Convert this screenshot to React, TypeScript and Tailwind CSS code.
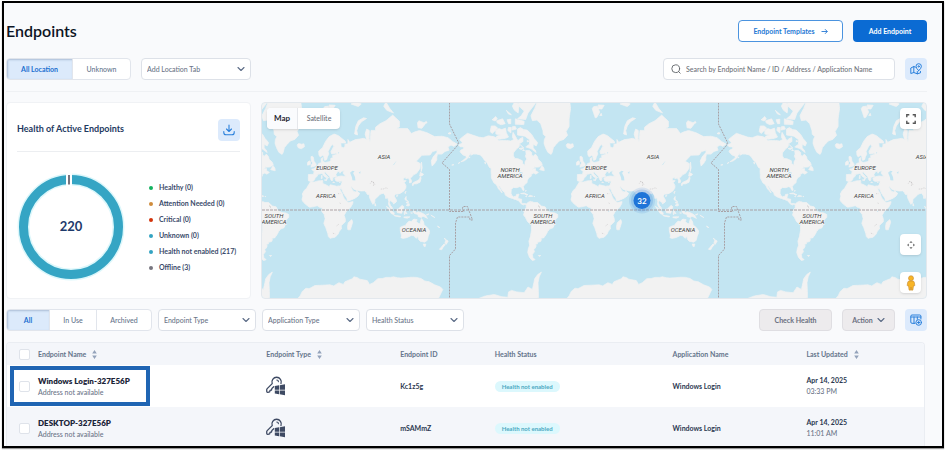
import { useState, type ReactNode } from "react";
import { clsx } from "clsx";

/* ---------- World map data (lon,lat pairs) ---------- */

const LAND = [
  // North America
  "-168,65.6 -166,64.6 -161,64.5 -161,63.5 -165,62.5 -166,61.5 -162,59.5 -158,58.8 -157.5,57.5 -162,55.5 -165,54.4 -160,55.2 -156,57 -153.5,59.3 -151.5,60.8 -151.5,59.2 -148,60 -144,60 -139,59.5 -136,58 -133,55.5 -130,54 -127.5,51 -124,49 -124.5,47 -124,43 -124,40 -122,37 -120.5,34.5 -117.5,33 -116,30.5 -114.5,28 -112,25.5 -110,23 -109.5,23.5 -111.5,26.5 -113,29 -114.7,31.5 -113,31 -109.5,26 -106,23 -105.5,20.3 -102,18 -96,15.8 -92,14.5 -87.5,13 -85.7,10.5 -83,8.2 -80.5,7.4 -79,8.8 -77.5,7.5 -77,8.5 -79.5,9.4 -82,9 -83.6,11 -83.4,15 -88.5,15.8 -88,18 -87,21.3 -90.3,21 -91,18.7 -94.5,18.2 -96.5,19.5 -97.7,22.5 -97.3,27 -94.5,29.5 -90,29.2 -86,30.3 -83.5,29.5 -82.5,27 -81,25.2 -80.2,27 -81.3,30.5 -79,33.2 -76,35 -76,37 -74,40 -70.5,41.7 -70.5,43.3 -67,44.8 -64.5,43.6 -61,45.3 -64.8,47 -65,49 -69,48.2 -66,50 -60,50.2 -56,52 -57,54 -61.5,56.5 -62,58 -65,60 -68,58.5 -70,59.5 -70,61 -73,62.3 -78,62.3 -77.5,60 -78.5,58.5 -76.5,56.5 -79,54.5 -79,51.7 -82.2,53 -82.5,55.2 -88,56.7 -92.5,57 -94.5,58.8 -94.5,60.8 -90.5,63.2 -87,64.5 -86,66.3 -81.5,67.5 -82,69.5 -87,68.5 -88,67.7 -90,68.8 -91.5,69.8 -95,71.7 -96,69.5 -94,68.5 -98,67.7 -104,68 -108,68 -114,67.8 -116,69 -121,69.8 -128,70.2 -135,69.3 -141,69.6 -149,70.5 -156,71.3 -163,69.5 -166.5,68.4 -163,67 -164,66.4",
  // Arctic islands
  "-64,61 -71,63.5 -78,64.5 -73,66 -73,68.3 -79,70 -89,70.5 -89,73 -85,73.6 -81,72.8 -76,72.6 -70,70.8 -67,69 -62,66.8 -64,65 -68,66 -68,63.8 -65.5,62.8",
  "-117,69 -113,68.6 -105,69 -101,69.6 -104,71.5 -105,73.4 -110,72.8 -114,73.2 -118,72.5 -118,71 -112,70.5 -117,70",
  "-125.5,72 -123,71.2 -120,72 -115.5,73.4 -119,74.2 -124,74.2",
  "-98,71.4 -97,73.6 -101,73.7 -102,72.5",
  "-96,72.6 -90.5,73 -92,74 -95.5,74",
  "-80.5,74.7 -80,75.8 -89,76.4 -92,76.6 -92,74.8",
  "-105.5,75 -109,76.6 -117,76 -116,75.2 -111,74.6",
  "-116,76.5 -118,77.3 -123,76.3 -119,75.9",
  "-98,75 -98,76.5 -103,76.3 -101,75",
  "-78,76.4 -75,78.3 -66,80.4 -60,82 -90,82 -87,80 -80,78.8 -84,77.5 -89,76.6",
  "-88,78.3 -87,80.2 -92,81.2 -96,80 -93,79",
  "-97,77.8 -104,79 -101,78",
  "-85.5,65.8 -81,64 -87,63.6 -84,62.9 -80.5,63.8",
  "-79.5,62.4 -82,62.2 -81,63",
  "-76,68 -73.5,67.6 -76,67.2",
  // Greenland
  "-44,59.8 -48.5,61.2 -51.5,64 -53.5,66.5 -53,68.5 -51,69.8 -54.5,70.8 -55,72.5 -58,75 -63,76.2 -69,76 -71,77.5 -66,79.5 -60,82 -20,82 -18,79.5 -20,76.5 -20,74 -24,72 -22,70.4 -27,68.5 -33,67.7 -38,65.6 -41,64 -42.5,61",
  // Iceland, Svalbard, Jan Mayen
  "-22.5,64 -18.5,63.4 -14,64.6 -14.8,66.2 -18,66 -22,66.4 -24,65.5",
  "11,79.4 15,76.9 17,77 21,78.5 18,80 13,79.9",
  "19,80.3 27,80.2 24,79.3 19,79.4",
  "21,77.6 24,77.6 23,78.2",
  // Novaya Zemlya, Franz Josef, Severnaya Zemlya, New Siberian Islands
  "53,71 57,70.6 56,72.5 58,74.2 62,75.6 69,76.7 65,76.9 58,76 54.5,74",
  "48,80.5 58,79.9 62,80.5 55,81",
  "96,79 105,78.3 100,79.5 95,80.9 92,80",
  "138,73.5 143,73.3 148,75.1 139,76 137,75.3",
  "146,75.2 150,75.2 149,75.8",
  "178,71.2 181,70.9 182,71.4 180,71.6",
  // Newfoundland, Vancouver, Haida Gwaii, Aleutians
  "-59.3,47.8 -53.2,46.8 -53.5,49 -56,51.4 -58,49.5",
  "-125,50 -123.5,48.5 -127.5,50.5",
  "-132,52.6 -131.5,54 -133,54",
  "-154.5,57.4 -152.5,57.6 -153,58.2",
  "-168.5,53.2 -166,54 -167.5,53.3",
  "-177,51.8 -174,52.2 -175,51.9",
  // Caribbean
  "-84.8,22 -80,22.9 -75,20.6 -77.5,20 -79,21.6",
  "-74.3,18.4 -70,18.3 -68.5,18.8 -70.5,19.8 -73,19.8",
  "-78.3,18.3 -76.3,18 -77,18.5",
  "-67,18 -65.8,18.4 -67,18.5",
  "-78,24.5 -77.5,26.5 -78.3,25",
  // South America
  "-77.3,8.5 -75,10.8 -71.5,12.3 -71.7,10.8 -70,12 -67,10.6 -62,10.7 -60,8.5 -57,6 -52,5 -50,1 -48,-1 -44,-2.7 -39,-3.2 -35,-5.5 -35,-9 -38.8,-13 -39.5,-18 -41.5,-22.5 -46,-24 -48.6,-27 -51,-31 -54,-34.5 -57.5,-34.6 -57,-36.5 -58,-38.3 -62,-39 -62.5,-41 -65,-41 -64,-42.8 -65.5,-45 -67.5,-46.5 -66,-48 -69,-50.5 -68.5,-53 -65.5,-54.8 -69,-55.5 -73,-53 -75.3,-49 -74.5,-45.5 -72.8,-42 -73.7,-38 -71.7,-33 -70.3,-26 -70.3,-18.5 -75.5,-15 -78.5,-9 -81,-6 -80,-3 -80.8,-1 -79,1.5 -77.3,4 -77.5,7",
  "-61,-51.5 -58,-51.5 -60,-52.2",
  // Eurasia
  "-9,38.7 -8.8,43.3 -2,43.5 -1.2,46 -4.5,48.3 -1.5,48.7 1.5,50.2 4,51.8 5,53.2 8.5,53.8 8.2,56.8 10.5,57.6 10.5,55 12,54.2 14.5,54 19,54.5 21,55.3 21.3,57.2 24,57.2 23.5,59.1 29.5,59.9 28,60.6 22.5,60 21.3,61.5 25,64.8 24,65.8 21.5,65.2 17.5,61.8 18.5,60 16.5,58 15.8,56.2 13,55.5 11.5,58.5 10.3,59.3 7,58 5.2,59.5 5,62 10,64 14,67.5 19,69.8 25.5,71 31,70.3 40.5,67.6 41,66.6 34.5,66.7 35,64.5 38,64 40,64.7 40,66 44,66.2 44,68.5 46.5,67 54,68.4 60,68.7 65,69 69,68.5 67,71 69,73 72.7,72.5 72.5,69 73.6,67 74,68.5 74.5,71 75,72.5 81,72.5 81,73.7 87,75 95,76 104,77.7 113,75.8 113,73.8 108,73.2 124,73.2 129,71.2 133,71.8 140,72.5 150,71.5 160,69.8 170,70 178,69.3 184,67.5 190,66.1 186,64.8 182,65.5 178,64.5 179.5,62.5 174,61.8 170,60 164,60 163,58 163,56 160,53 156.7,51 155.5,55 158,58 163,61 163.5,62.5 157,61.6 154,59.4 143,59.2 135.5,54.8 141,53 140.5,49 136,44.5 132,43 129.5,41 127.5,39.5 129.3,37 129,35.2 126.5,34.5 126.5,37.5 124.8,39.7 121.5,39 121.5,40.8 117.8,39 119,37.3 122,37 119.5,35 121.8,31.5 121.5,28.5 119,25.3 114,22.3 110,21.3 108,21.5 105.8,19 109,14 109,11.5 105,8.7 104.8,10.3 100.8,13.3 99.5,10.5 101,6.8 103.4,3.8 103.5,1.4 101,3 98.3,8 98.6,12 97.5,16.5 94.5,16 94.3,19 91.8,22.5 88.5,21.7 86.8,20.8 82.3,16.6 80.2,15 80,11 77.5,8.2 76,10.5 73,17 72.6,21 70,21 68.5,23.6 66.5,25.3 61,25.2 57,26 54,26.6 51,28 49,30.2 48,30 50,26.8 51.5,25 54,24.1 56.3,26 57,24 59.8,22.5 57.8,19 55,17 52,15.5 45,12.8 43.2,13 42.5,16.5 39,21 35.5,27.5 34.9,29.5 34,27.8 32.5,29.9 32.5,31.2 34.5,31.6 36,35 36,36.8 32,36.1 28,36.7 26.5,39.5 29,41 35,42 41.3,41.3 37.5,44.7 39,47 35,46.2 33.5,44.5 32.5,46.2 30.5,46.2 28,43.5 28.8,41.2 26,40.8 23.8,40.3 24,38 22.8,36.6 21.2,38 19.4,41.5 15,44.8 13.7,45.6 12.3,45 13.6,43.5 16,41.8 18.4,40 16.8,40.5 16.5,38.8 15.7,38 15.5,40 12.5,41.5 10.3,43.8 8.5,44.3 4.5,43.5 3,43 3.2,41.8 0,39.7 -0.5,38 -2.2,36.7 -5.6,36.1 -9,37",
  // British Isles, Mediterranean islands
  "-5.5,50 1.3,51.2 1.5,52.8 -1.5,55 -2,57.6 -3.5,58.6 -5.5,58.2 -5,55 -3,53.5 -5,52",
  "-10,51.7 -6.3,52.2 -6,54.5 -8,55.2 -10,54",
  "8.3,39 9.7,39.5 9.4,42.8 8.5,41.5",
  "12.5,37.8 15.4,37 15.5,38.2",
  "23.6,35.3 26.2,35.1 24,35.6",
  "32.4,34.9 34,35.2 33,35.3",
  // Africa, Madagascar
  "-6,35.8 -1,35.6 4,36.8 10.5,37.2 10.5,34 15,32.4 19,30.3 20.5,32.6 25,31.6 29,30.9 32.3,31.2 32.5,29.9 34,26 36.5,22 37.3,19 39.5,15.3 43.2,11.6 44.5,10.5 51,11.8 50.5,9 47.5,4.2 42,-1 39,-6.5 40.6,-11 40.5,-15 35,-20 35.5,-24 32.6,-26.5 31,-30 27,-33.6 20,-34.8 18,-33 17,-29 14.5,-22.5 11.8,-17 13.7,-11 12,-5 9,-1 9.7,3.8 6,4.3 3,6.4 -3,5 -7.5,4.4 -13,8.5 -16.7,12.5 -17.4,14.7 -16.2,19 -17,21.5 -14.5,26 -11,28.7 -9.7,31",
  "49.3,-12 50.4,-15.5 47.2,-25 44,-25 43.5,-21.5 44.4,-16.3",
  "80,9.7 81.8,7 80.3,6",
  // East Asia
  "130,33.5 131,31.2 132,33.5 136,33.6 140.5,35.3 142,39.5 141,41.4 139.7,38.5 136.8,37 132.5,35.4",
  "140,42 141,45.4 145.3,43.5 143,42",
  "142,46 143.5,49.5 142.5,54.2 142,50",
  "120.2,23 121.8,25.1 120.8,22",
  "108.7,19 110.9,20 110,18.3",
  "120.3,16 122,18.5 122,15 124,13 120.7,14",
  "122,7 126,9.5 126.3,6.5 124.5,6",
  "122,11 125,12.3 125,10.3 123,9.4",
  // Indonesia, New Guinea
  "95.5,5.5 98,4.2 103.5,-1 106,-3 105.8,-5.8 102,-4 98.7,1",
  "105.3,-6.6 108.5,-6.7 114.5,-7.8 114.3,-8.6 108,-7.7",
  "109,1.5 111.5,2 116.7,6.9 119,5 117.5,1 116,-3.8 110.3,-2.9",
  "119.5,-5.4 119.3,-2.5 120.5,1 125,1.6 121,-.7 123,-4.5 121.2,-2.4 120.4,-5.4",
  "119,-8.5 125,-8.3 127,-8.5 123.5,-10.3 119,-9.4",
  "127.5,1.8 128.6,.5 128,-.8",
  "128,-3.2 130.6,-3.3 128.5,-3.5",
  "131,-.8 134.2,-1 135.2,-3.3 138,-1.6 144,-3.8 147.8,-6.2 150.5,-10.5 144.5,-7.7 142.5,-9.2 138.2,-8.3 137.8,-5.5 133,-4",
  "149,-5.9 152.3,-4.3 151,-6",
  "155,-6 160.5,-9.4 156,-7",
  "164,-20.3 167,-22.3 165,-21.8",
  // Australia, New Zealand
  "114,-22 114.2,-26 115.7,-32 115,-34.2 118,-35 123.5,-33.9 129,-31.6 132,-32 135.5,-34.8 137.8,-32.8 138.2,-35.5 140.5,-38 144,-38.5 146.5,-39 150,-37.3 151.5,-33 153.5,-28 152.8,-25.2 149,-21 146,-19 145.3,-15 142.5,-10.8 141.5,-13.5 140.8,-17.5 139,-17.3 135.6,-15 136.8,-12.2 132.5,-11.4 130,-13.3 129,-15 126,-14 122.3,-17.5 121,-19.6 117,-20.7",
  "144.8,-41 148.3,-41 147.5,-43.4 146,-43.4",
  "173,-34.5 175.8,-36.8 178.3,-37.8 177,-39.5 175.3,-41.5 173.8,-39.3 175,-37.5",
  "172.8,-40.6 174.2,-41.7 171,-44.5 169.5,-46.5 166.5,-46 170,-43",
  // Antarctica
  "-180,-84 -180,-78 -150,-77 -140,-75.3 -132,-74.5 -120,-74 -110,-74.8 -102,-75 -101,-73 -97,-72.4 -90,-73 -80,-73.3 -75,-71 -69,-72 -67,-69 -66,-67 -62,-64.8 -57,-63.3 -60,-66 -61.5,-69 -61,-73 -61,-75 -60,-77 -30,-78 -27,-76.5 -20,-74.5 -17,-72.8 -12,-71.5 -8,-71.7 0,-70.3 10,-70.2 20,-70 25,-70.5 32,-69 38,-69.8 40,-68.6 45,-67.8 50,-67 52,-66 57,-66.5 60,-67.3 70,-68 73,-69.8 78,-69 84,-67 90,-66.9 95,-66.3 101,-66.3 105,-66 110,-66.5 115,-66.7 122,-66.5 130,-66.2 136,-66.3 142,-66.9 147,-68.2 153,-68.6 160,-70 168,-71 171,-72 166,-75 163,-78 180,-78 180,-84",
];

const LAKES = [
  "47,45 50,46.8 53,46.5 51,44.8 53.5,41 54,37.2 50,37.4 49.5,40.2",
  "58.5,45 61,46.5 60.5,44",
  "104,51.6 109.5,55.5 106,52.3",
  "-92,46.8 -88,48.6 -84.5,46.7 -88,46.8",
  "-87.5,42 -86,45.8 -82.5,45.5 -82,43.5 -84,45 -86.3,43.5",
  "-83,41.8 -79,42.8 -80,42.3",
  "30.5,60 32.5,61 31.5,61.4",
  "32,-1 33.8,0 33.5,-2",
];

const BORDERS = [
  "74,34 76,36 78,35.5 80,33 78,31.5 79,35 75,36.5",
  "88,27.5 92,27.8 95,29 97,28.3",
  "31,22 34,22",
  "33,10 35,9",
  "-60,5 -61,7 -59,3",
  "29,-20 32,-18",
  "24,-29 27,-30",
];

const CONTINENTS = [
  { lines: ["NORTH", "AMERICA"], x: 248, y: 69 },
  { lines: ["SOUTH", "AMERICA"], x: 281, y: 115 },
  { lines: ["EUROPE"], x: 334, y: 67 },
  { lines: ["AFRICA"], x: 333, y: 95 },
  { lines: ["ASIA"], x: 391, y: 56 },
  { lines: ["OCEANIA"], x: 421, y: 129 },
];

const MAP_WIDTH = 664;
const WORLD_WIDTH = 269;
const WORLD_OFFSETS = [-WORLD_WIDTH, 0, WORLD_WIDTH];
const RADIUS = WORLD_WIDTH / (2 * Math.PI);

const project = (pair: string) => {
  const [lon, lat] = pair.split(",").map(Number);
  const x = 322 + (lon * WORLD_WIDTH) / 360;
  const y = 108 - RADIUS * Math.log(Math.tan(Math.PI / 4 + (lat * Math.PI) / 360));
  return `${x.toFixed(1)} ${y.toFixed(1)}`;
};

const toPath = (shapes: string[], close: string) =>
  shapes.map((s) => "M" + s.split(" ").map(project).join("L") + close).join("");

const landPath = toPath(LAND, "Z");
const lakePath = toPath(LAKES, "Z");
const borderPath = toPath(BORDERS, "");

const World = ({ offset }: { offset: number }) => (
  <g transform={`translate(${offset} 0)`}>
    <path d={landPath} fill="#f2f2f2" stroke="#f2f2f2" strokeWidth=".7" strokeLinejoin="round" />
    <path d={lakePath} fill="#c3e5f2" />
    <path d={borderPath} fill="none" stroke="#b5b0b2" strokeWidth=".5" strokeDasharray="1 1" />
    <path
      d="M187.5 0V21.5L196.5 40L195.5 43L180 60.500L187.500 67V109H202L200.500 106L201 104H205.500L210.500 117.500H208L207.500 114.500H195.500L193.500 120.500V146.500L187.500 153V196"
      fill="none"
      stroke="#a5989c"
      strokeWidth=".9"
      strokeDasharray="2 1"
    />
  </g>
);

// only the labels that fall inside the visible width
const labels = WORLD_OFFSETS.flatMap((offset) =>
  CONTINENTS.map((c) => ({ ...c, x: c.x + offset })),
).filter((c) => c.x > 0 && c.x < MAP_WIDTH);

const WorldMap = () => (
  <svg
    viewBox="0 0 664 196"
    preserveAspectRatio="xMidYMid slice"
    className="absolute inset-0 h-full w-full bg-[#c3e5f2]"
    role="img"
    aria-label="Map"
  >
    {WORLD_OFFSETS.map((o) => (
      <World key={o} offset={o} />
    ))}
    <path d="M0 107.500H664" stroke="#a5989c" strokeWidth=".9" strokeDasharray="3 1" />
    <g
      className="font-['Roboto',sans-serif] text-[6px] font-normal italic"
      fill="#3c3c3c"
      stroke="#f7f7f7"
      strokeWidth="1"
      paintOrder="stroke"
    >
      {labels.map((c) => (
        <text key={`${c.lines[0]}-${c.x}`} textAnchor="middle">
          {c.lines.map((line, i) => (
            <tspan key={line} x={c.x} y={c.y + i * 6}>
              {line}
            </tspan>
          ))}
        </text>
      ))}
    </g>
    <circle cx="380" cy="98" r="13" fill="#1f74d8" opacity=".12" />
    <circle cx="380" cy="98" r="11" fill="#1f74d8" opacity=".18" />
    <circle cx="380" cy="98" r="8.5" fill="#1f74d8" />
    <text x="380" y="101" textAnchor="middle" fill="#fff" className="text-[8px] font-bold">
      32
    </text>
  </svg>
);

/* ---------- Icons ---------- */

const Chevron = ({ className }: { className?: string }) => (
  <svg viewBox="0 0 8 8" className={clsx("h-2 w-2", className)} fill="none" stroke="#5b6b86" strokeWidth="1.1" strokeLinecap="round" strokeLinejoin="round">
    <path d="M1 2.500L4 5.500L7 2.500" />
  </svg>
);

const SortIcon = () => (
  <svg viewBox="0 0 5 9" className="h-[9px] w-[5px]" fill="#94a3bb">
    <path d="M2.500 0L4.800 3.600H.2ZM2.500 9L4.800 5.400H.2Z" />
  </svg>
);

const DownloadIcon = () => (
  <svg viewBox="0 0 12 12" className="h-3 w-3" fill="none" stroke="#2a80dc" strokeWidth="1.1" strokeLinecap="round" strokeLinejoin="round">
    <path d="M6 1V7.500M3.500 5L6 7.500L8.500 5M.8 7.500V8.500Q.8 10.800 3 10.800H9Q11.200 10.800 11.200 8.500V7.500" />
  </svg>
);

const MapPinIcon = () => (
  <svg viewBox="0 0 12 12" className="h-3 w-3" fill="none" stroke="#2a80dc" strokeWidth="1" strokeLinecap="round" strokeLinejoin="round">
    <path d="M5.300 4.200L3.800 3.500L.8 5V10.500L3.800 9.500L7.300 10.800L10.500 9.800V8.500M3.800 3.500V9.500M7.300 8.500V10.800" />
    <path d="M8.700 7.700Q6 5.200 6 3.400A2.600 2.600 0 0 1 11.400 3.400Q11.400 5.200 8.700 7.700Z" />
    <circle cx="8.700" cy="3.400" r=".7" />
  </svg>
);

const ColumnsIcon = () => (
  <svg viewBox="0 0 12 12" className="h-3 w-3" fill="none" stroke="#2a80dc" strokeWidth="1" strokeLinecap="round" strokeLinejoin="round">
    <path d="M5 9.300H2Q.8 9.300 .8 8.100V2.200Q.8 1 2 1H9.700Q10.900 1 10.900 2.200V5M.8 3H10.900M4 3V9.300M7.300 3V5.300" />
    <circle cx="8.700" cy="8.500" r="2.800" />
    <path d="M8.700 7.300V9.700M7.500 8.500H9.900" />
  </svg>
);

const SearchIcon = () => (
  <svg viewBox="0 0 10 10" className="h-[10px] w-[10px] shrink-0" fill="none" stroke="#5f6368" strokeWidth=".9" strokeLinecap="round">
    <circle cx="4.700" cy="4.700" r="3.900" />
    <path d="M7.500 7.500L9.200 9.200" />
  </svg>
);

const WindowsLoginIcon = () => (
  <svg viewBox="0 0 20 20" className="h-5 w-5" fill="none">
    <path
      d="M6.200 7.600L1.200 12.600Q.7 13.100 .7 14L.8 15.600Q1 16.400 1.900 16.300L3.700 15.900L4 14.400L5.500 14L5.900 12.400L7.700 10.800M6.200 7.600A4.700 4.700 0 1 1 15 7.600"
      stroke="#3e4a63"
      strokeWidth="1.300"
      strokeLinecap="round"
      strokeLinejoin="round"
    />
    <path d="M10.800 4Q12.300 4.100 12.400 5.600" stroke="#3e4a63" strokeWidth="1.100" strokeLinecap="round" />
    <path d="M8.800 10L13 9.300V13.700H8.800ZM13.700 9.200L19 8.300V13.700H13.700ZM8.800 14.400H13V18.200L8.800 17.500ZM13.700 14.400H19V19.200L13.700 18.300Z" fill="#3e4a63" />
  </svg>
);

const FullscreenIcon = () => (
  <svg viewBox="0 0 10 10" className="h-[10px] w-[10px]" fill="none" stroke="#555" strokeWidth="1.400">
    <path d="M.8 3.300V.8H3.300M6.700 .8H9.200V3.300M9.200 6.700V9.200H6.700M3.300 9.200H.8V6.700" />
  </svg>
);

const PanIcon = () => (
  <svg viewBox="0 0 10 10" className="h-[10px] w-[10px]" fill="#666">
    <path d="M5 1L6.600 2.800H3.400ZM5 9L6.600 7.200H3.400ZM1 5L2.800 3.400V6.600ZM9 5L7.200 3.400V6.600Z" />
  </svg>
);

const PegmanIcon = () => (
  <svg viewBox="0 0 10 16" className="h-4 w-[10px]" fill="#f8b526" stroke="#c58a35" strokeWidth=".6">
    <path d="M3.200 6H6.800Q8 6 8.300 7.300L8.800 10.300Q8.600 11.200 7.500 10.900L6.900 15Q6 15.600 5.200 15L5 12.200L4.800 15Q4 15.600 3.100 15L2.500 10.900Q1.400 11.200 1.200 10.300L1.700 7.300Q2 6 3.200 6Z" />
    <circle cx="5" cy="3.200" r="2.500" />
  </svg>
);

/* ---------- Controls ---------- */

const Segmented = ({ items }: { items: { label: string; width: string }[] }) => {
  const [active, setActive] = useState(items[0].label);
  return (
    <div className="flex h-[22px] overflow-hidden rounded border border-[#e1e5ec] bg-white">
      {items.map((item, i) => (
        <button
          key={item.label}
          type="button"
          onClick={() => setActive(item.label)}
          className={clsx(
            item.width,
            i > 0 && "border-l border-[#e1e5ec]",
            active === item.label
              ? "bg-[#dceafb] font-bold text-[#1a6fd0] shadow-[inset_1px_1px_2px_rgba(60,90,130,0.3)]"
              : "font-medium text-[#64748b]",
          )}
        >
          {item.label}
        </button>
      ))}
    </div>
  );
};

const FilterSelect = ({ label, width }: { label: string; width: string }) => (
  <div className={clsx("relative h-[22px]", width)}>
    <select
      aria-label={label}
      className="h-full w-full appearance-none rounded border border-[#dde1e8] bg-white pr-5 pl-[5px] font-medium text-[#6b7588]"
    >
      <option>{label}</option>
    </select>
    <Chevron className="pointer-events-none absolute top-[7px] right-[6px]" />
  </div>
);

const IconButton = ({ label, children }: { label: string; children: ReactNode }) => (
  <button
    type="button"
    aria-label={label}
    className="flex h-[22px] w-[22px] shrink-0 items-center justify-center rounded bg-[#dceafc]"
  >
    {children}
  </button>
);

const MapButton = ({ label, className, children }: { label: string; className: string; children: ReactNode }) => (
  <button
    type="button"
    aria-label={label}
    className={clsx("absolute right-[5px] flex h-[21px] w-[21px] items-center justify-center rounded bg-white shadow-sm", className)}
  >
    {children}
  </button>
);

/* ---------- Panels ---------- */

const legend = [
  { label: "Healthy (0)", color: "bg-[#12b15f]" },
  { label: "Attention Needed (0)", color: "bg-[#cf8c3c]" },
  { label: "Critical (0)", color: "bg-[#d2330b]" },
  { label: "Unknown (0)", color: "bg-[#33a3c2]" },
  { label: "Health not enabled (217)", color: "bg-[#33a3c2]" },
  { label: "Offline (3)", color: "bg-[#77757f]" },
];

const HealthCard = () => (
  <section className="flex w-[245px] shrink-0 flex-col rounded border border-[#f0f2f5] bg-white px-[10px] pt-4">
    <div className="flex items-start justify-between border-b border-[#eceef1] pb-[10px]">
      <h2 className="pt-[3px] text-[9px] leading-[14px] font-bold text-[#1e3a5f]">Health of Active Endpoints</h2>
      <IconButton label="Download">
        <DownloadIcon />
      </IconButton>
    </div>
    <div className="flex flex-1 items-center justify-between pt-1">
      <svg viewBox="0 0 108 108" className="h-[108px] w-[108px]">
        <circle cx="54" cy="54" r="47.500" fill="none" stroke="#dcf7fb" strokeWidth="12" />
        <circle cx="54" cy="54" r="47.500" fill="none" stroke="#35a5c4" strokeWidth="9" />
        <path d="M49 0V13H55V0Z" fill="#fff" />
        <path d="M51 2V11.500H53V2Z" fill="#77757f" />
        <text x="54" y="58" textAnchor="middle" fill="#1e3a6b" className="text-[13px] font-bold">
          220
        </text>
      </svg>
      <ul className="w-[91px] space-y-[6px]">
        {legend.map((item) => (
          <li key={item.label} className="flex items-center gap-[6px] leading-[10px] font-bold whitespace-nowrap text-[#3a4a6a]">
            <span className={clsx("mt-px h-1 w-1 rounded-full", item.color)} />
            {item.label}
          </li>
        ))}
      </ul>
    </div>
  </section>
);

const MapPanel = () => (
  <section className="relative flex-1 overflow-hidden rounded border border-[#e3e8ed]">
    <WorldMap />
    <div className="absolute top-[5px] left-[5px] flex h-[21px] overflow-hidden rounded bg-white shadow-sm">
      <button type="button" className="w-[31px] border-r border-[#e5e7eb] bg-[#fafbfd] text-[8px] font-bold text-[#1f2430]">
        Map
      </button>
      <button type="button" className="w-[42px] font-medium text-[#6b6f78]">
        Satellite
      </button>
    </div>
    <MapButton label="Toggle fullscreen view" className="top-[5px]">
      <FullscreenIcon />
    </MapButton>
    <MapButton label="Map camera controls" className="bottom-[43px]">
      <PanIcon />
    </MapButton>
    <MapButton label="Street View" className="bottom-[5px]">
      <PegmanIcon />
    </MapButton>
  </section>
);

const endpoints = [
  { name: "Windows Login-327E56P", id: "Kc1z5g", app: "Windows Login", date: "Apr 14, 2025", time: "03:33 PM", highlighted: true },
  { name: "DESKTOP-327E56P", id: "mSAMmZ", app: "Windows Login", date: "Apr 14, 2025", time: "11:01 AM", highlighted: false },
];

const columns = [
  { label: "Endpoint Name", sortable: true },
  { label: "Endpoint Type", sortable: true },
  { label: "Endpoint ID", sortable: false },
  { label: "Health Status", sortable: false },
  { label: "Application Name", sortable: false },
  { label: "Last Updated", sortable: true },
];

const Checkbox = ({ label }: { label: string }) => (
  <input
    type="checkbox"
    aria-label={label}
    className="ml-3 block h-[11px] w-[11px] appearance-none rounded-xs border border-[#dfe3ea] bg-white checked:bg-[#0b6bd3]"
  />
);

const EndpointTable = () => (
  <div className="mr-[2px] overflow-hidden rounded-t border border-b-0 border-[#eaedf2]">
    <table className="w-full table-fixed text-left">
      <colgroup>
        <col className="w-[31px]" />
        <col className="w-[24.9%]" />
        <col className="w-[14.6%]" />
        <col className="w-[10.3%]" />
        <col className="w-[19.4%]" />
        <col className="w-[14.6%]" />
        <col />
      </colgroup>
      <thead className="bg-[#f4f6fa] text-[#64748b]">
        <tr className="h-[22px]">
          <th>
            <Checkbox label="Select all endpoints" />
          </th>
          {columns.map((column) => (
            <th key={column.label} className="p-0 font-bold">
              <span className="flex items-center gap-[6px]">
                {column.label}
                {column.sortable && <SortIcon />}
              </span>
            </th>
          ))}
        </tr>
      </thead>
      <tbody className="font-medium text-[#2b3850]">
        {endpoints.map((endpoint) => (
          <tr key={endpoint.name} className="h-[42px] even:bg-[#f4f6fa] odd:bg-white">
            <td className="relative">
              <Checkbox label={`Select ${endpoint.name}`} />
              {endpoint.highlighted && (
                <span className="pointer-events-none absolute top-[1px] left-[3px] h-10 w-[140px] border-4 border-[#2065b3]" />
              )}
            </td>
            <td>
              <a href="#" className="block text-[8px] leading-3 font-extrabold text-[#1b2438]">
                {endpoint.name}
              </a>
              <span className="block leading-[11px] text-[#6b7588]">Address not available</span>
            </td>
            <td>
              <WindowsLoginIcon />
            </td>
            <td className="font-bold">{endpoint.id}</td>
            <td>
              <span className="inline-block rounded-full bg-[#dcf8fd] px-[7px] text-[6px] leading-[11px] font-bold text-[#4ba9c2]">
                Health not enabled
              </span>
            </td>
            <td className="font-bold">{endpoint.app}</td>
            <td>
              <span className="block leading-[11px] font-bold">{endpoint.date}</span>
              <span className="block leading-[11px] text-[#6b7588]">{endpoint.time}</span>
            </td>
          </tr>
        ))}
      </tbody>
    </table>
  </div>
);

export default function App() {
  return (
    <div className="h-screen bg-white px-[2px] pt-px pb-[2px] font-['Lato',sans-serif] text-[7px] leading-[11px]">
      <main className="h-full overflow-hidden border-2 border-black bg-[#f9fafc] pr-[15px] pl-[2px] shadow-[0_1px_1px_rgba(0,0,0,0.4)]">
        <header className="flex items-center justify-between pt-[17px]">
          <h1 className="text-[16px] leading-[22px] font-semibold text-[#0c1424]">Endpoints</h1>
          <div className="flex gap-[10px]">
            <a
              href="#"
              className="flex h-[22px] w-[105px] items-center justify-center gap-[6px] rounded border border-[#4b93df] bg-white font-bold text-[#2678d4]"
            >
              Endpoint Templates
              <svg viewBox="0 0 7 7" className="h-[7px] w-[7px]" fill="none" stroke="#2678d4" strokeWidth=".9">
                <path d="M.5 3.500H6.300M4 1.200L6.300 3.500L4 5.800" />
              </svg>
            </a>
            <button type="button" className="h-[22px] w-[74px] rounded bg-[#0b6bd3] font-bold text-white">
              Add Endpoint
            </button>
          </div>
        </header>

        <div className="mt-4 flex items-center border-b border-[#eff1f4] pb-[11px]">
          <Segmented
            items={[
              { label: "All Location", width: "w-[65px]" },
              { label: "Unknown", width: "w-[58px]" },
            ]}
          />
          <div className="ml-[10px]">
            <FilterSelect label="Add Location Tab" width="w-[110px]" />
          </div>
          <label className="ml-auto flex h-[22px] w-[232px] items-center gap-[5px] rounded border border-[#dde1e8] bg-white px-[7px]">
            <SearchIcon />
            <input
              type="search"
              aria-label="Search endpoints"
              placeholder="Search by Endpoint Name / ID / Address / Application Name"
              className="w-full min-w-0 bg-transparent font-medium outline-none placeholder:text-[#6f737b]"
            />
          </label>
          <div className="ml-[10px]">
            <IconButton label="Toggle map">
              <MapPinIcon />
            </IconButton>
          </div>
        </div>

        <div className="mt-[10px] flex h-[197px] gap-[10px]">
          <HealthCard />
          <MapPanel />
        </div>

        <div className="mt-[10px] flex items-center gap-[6px]">
          <Segmented
            items={[
              { label: "All", width: "w-[42px]" },
              { label: "In Use", width: "w-[47px]" },
              { label: "Archived", width: "w-[55px]" },
            ]}
          />
          <FilterSelect label="Endpoint Type" width="w-[98px]" />
          <FilterSelect label="Application Type" width="w-[98px]" />
          <FilterSelect label="Health Status" width="w-[98px]" />
          <div className="ml-auto flex gap-[10px]">
            <button type="button" className="w-[73px] rounded border border-[#dfdee2] bg-[#edebed] font-bold text-[#6b7080]">
              Check Health
            </button>
            <button
              type="button"
              className="flex w-[53px] items-center justify-center gap-1 rounded border border-[#dfdee2] bg-[#edebed] font-bold text-[#6b7080]"
            >
              Action
              <Chevron />
            </button>
            <IconButton label="Customize columns">
              <ColumnsIcon />
            </IconButton>
          </div>
        </div>

        <div className="mt-[11px]">
          <EndpointTable />
        </div>
      </main>
    </div>
  );
}
